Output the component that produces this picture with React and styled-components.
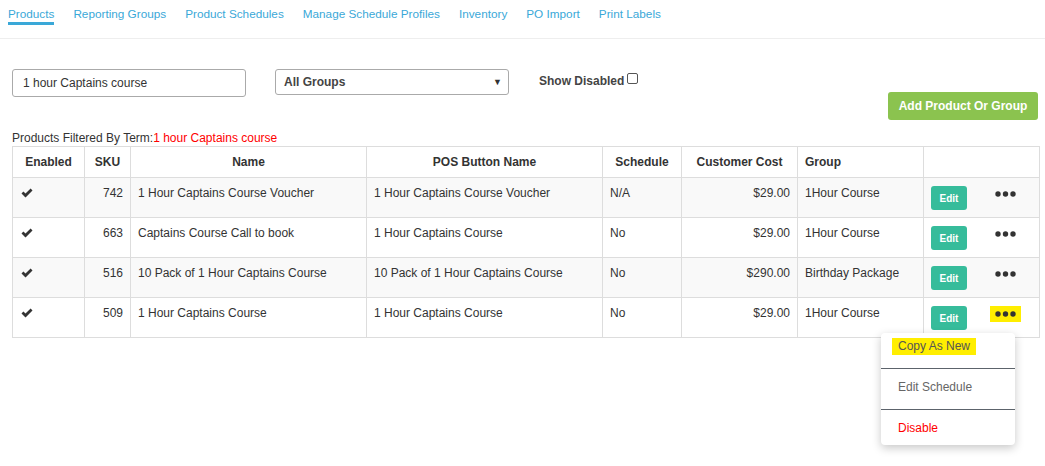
import React from "react"
import styled, { createGlobalStyle } from "styled-components"

const GlobalStyle = createGlobalStyle`
  body {
    margin: 0;
    background: #fff;
    font-family: "Liberation Sans", Arial, sans-serif;
    font-size: 12px;
    color: #333;
  }
  #root {
    min-height: 100vh;
  }
`

const Nav = styled.nav`
  display: flex;
  gap: 19px;
  height: 39px;
  padding: 6px 8px 0;
  box-sizing: border-box;
  border-bottom: 1px solid #eee;
`

const Tab = styled.a`
  color: #3aa8d8;
  font-size: 11.75px;
  line-height: 15px;
  height: 15px;
  padding-bottom: 1px;
  text-decoration: none;
  border-bottom: 3px solid ${props => (props.$active ? "#3aa8d8" : "transparent")};
`

const Content = styled.div`
  padding: 30px 6px 0 12px;
`

const Toolbar = styled.div`
  display: flex;
  align-items: flex-start;
`

const SearchInput = styled.input`
  width: 234px;
  height: 28px;
  box-sizing: border-box;
  border: 1px solid #aaa;
  border-radius: 3px;
  padding: 0 10px;
  font-family: inherit;
  font-size: 12px;
  color: #333;
  outline: none;
`

const GroupSelect = styled.div`
  display: flex;
  align-items: center;
  justify-content: space-between;
  width: 234px;
  height: 26px;
  box-sizing: border-box;
  margin-left: 29px;
  padding: 0 6px 0 8px;
  border: 1px solid #aaa;
  border-radius: 3px;
  font-weight: bold;
  color: #444;
  span {
    font-size: 9px;
    color: #333;
  }
`

const ShowDisabled = styled.label`
  display: flex;
  align-items: center;
  gap: 3px;
  margin: 4px 0 0 30px;
  font-weight: bold;
  color: #444;
  line-height: 14px;
`

const Check = styled.input`
  appearance: none;
  width: 11px;
  height: 11px;
  margin: 0 0 4px;
  border: 1px solid #555;
  border-radius: 2px;
  background: #fff;
`

const AddButton = styled.button`
  margin: 23px 1px 0 auto;
  width: 150px;
  height: 28px;
  background: #8bc34f;
  border: none;
  border-radius: 3px;
  color: #fff;
  font-family: inherit;
  font-size: 12px;
  font-weight: bold;
`

const FilterNote = styled.div`
  margin-top: 11px;
  line-height: 15px;
  em {
    font-style: normal;
    color: #f00;
  }
`

const Table = styled.table`
  width: 1027px;
  table-layout: fixed;
  border-collapse: collapse;
  th,
  td {
    border: 1px solid #ddd;
    padding: 8px 7px 7px;
    vertical-align: top;
    line-height: 15px;
    color: #333;
  }
  th {
    height: 14px;
    font-weight: bold;
    text-align: center;
  }
  tbody tr:nth-child(odd) {
    background: #f9f9f9;
  }
`

const Cell = styled.td`
  && {
    text-align: ${props => props.$align || "left"};
  }
`

const ActionWrap = styled.div`
  position: relative;
  display: flex;
  align-items: flex-start;
`

const EditButton = styled.button`
  width: 36px;
  height: 24px;
  padding: 0;
  border: none;
  border-radius: 3px;
  background: #36bc9b;
  color: #fff;
  font-family: inherit;
  font-size: 10px;
  font-weight: bold;
`

const Dots = styled.div`
  display: flex;
  align-items: center;
  justify-content: center;
  width: 31px;
  height: 16px;
  margin-left: 23px;
  background: ${props => (props.$active ? "#ffee00" : "transparent")};
`

const Menu = styled.ul`
  position: absolute;
  top: 27px;
  left: -50px;
  width: 134px;
  margin: 0;
  padding: 0;
  list-style: none;
  background: #fff;
  border-radius: 4px;
  box-shadow: 0 3px 10px rgba(0, 0, 0, 0.22);
  z-index: 2;
`

const MenuItem = styled.li`
  padding: 10px 17px 13px;
  line-height: 17px;
  color: ${props => props.$color || "#666"};
  & + & {
    border-top: 1px solid #5c636b;
  }
  &:first-child {
    padding-top: 5px;
  }
  &:last-child {
    padding-bottom: 8px;
  }
`

const Highlight = styled.span`
  display: inline-block;
  margin-left: -6px;
  padding: 0 6px;
  background: #ffee00;
  color: #555;
`

const CheckIcon = () => (
  <svg width="12" height="10" viewBox="0 0 12 10" style={{ marginLeft: 1, marginTop: 2 }}>
    <path d="M0.5 5.4 L2.4 3.5 L4.5 5.6 L9.6 0.5 L11.5 2.4 L4.5 9.4 Z" fill="#333" />
  </svg>
)

const DotsIcon = () => (
  <svg width="21" height="6" viewBox="0 0 21 6">
    <circle cx="3" cy="3" r="2.7" fill="#333" />
    <circle cx="10.5" cy="3" r="2.7" fill="#333" />
    <circle cx="18" cy="3" r="2.7" fill="#333" />
  </svg>
)

const tabs = [
  "Products",
  "Reporting Groups",
  "Product Schedules",
  "Manage Schedule Profiles",
  "Inventory",
  "PO Import",
  "Print Labels",
]

const rows = [
  { sku: 742, name: "1 Hour Captains Course Voucher", pos: "1 Hour Captains Course Voucher", schedule: "N/A", cost: "$29.00", group: "1Hour Course" },
  { sku: 663, name: "Captains Course Call to book", pos: "1 Hour Captains Course", schedule: "No", cost: "$29.00", group: "1Hour Course" },
  { sku: 516, name: "10 Pack of 1 Hour Captains Course", pos: "10 Pack of 1 Hour Captains Course", schedule: "No", cost: "$290.00", group: "Birthday Package" },
  { sku: 509, name: "1 Hour Captains Course", pos: "1 Hour Captains Course", schedule: "No", cost: "$29.00", group: "1Hour Course", open: true },
]

export default function App() {
  return (
    <>
      <GlobalStyle />
      <Nav>
        {tabs.map((t, i) => (
          <Tab key={t} $active={i === 0}>
            {t}
          </Tab>
        ))}
      </Nav>
      <Content>
        <Toolbar>
          <SearchInput defaultValue="1 hour Captains course" />
          <GroupSelect>
            All Groups<span>▼</span>
          </GroupSelect>
          <ShowDisabled>
            Show Disabled <Check type="checkbox" />
          </ShowDisabled>
          <AddButton>Add Product Or Group</AddButton>
        </Toolbar>
        <FilterNote>
          Products Filtered By Term:<em>1 hour Captains course</em>
        </FilterNote>
        <Table>
          <colgroup>
            <col style={{ width: 72 }} />
            <col style={{ width: 46 }} />
            <col style={{ width: 236 }} />
            <col style={{ width: 236 }} />
            <col style={{ width: 79 }} />
            <col style={{ width: 116 }} />
            <col style={{ width: 126 }} />
            <col style={{ width: 116 }} />
          </colgroup>
          <thead>
            <tr>
              <th>Enabled</th>
              <th>SKU</th>
              <th>Name</th>
              <th>POS Button Name</th>
              <th>Schedule</th>
              <th>Customer Cost</th>
              <Cell as="th">Group</Cell>
              <th></th>
            </tr>
          </thead>
          <tbody>
            {rows.map(r => (
              <tr key={r.sku}>
                <Cell>
                  <CheckIcon />
                </Cell>
                <Cell $align="right">{r.sku}</Cell>
                <Cell>{r.name}</Cell>
                <Cell>{r.pos}</Cell>
                <Cell>{r.schedule}</Cell>
                <Cell $align="right">{r.cost}</Cell>
                <Cell>{r.group}</Cell>
                <Cell>
                  <ActionWrap>
                    <EditButton>Edit</EditButton>
                    <Dots $active={r.open}>
                      <DotsIcon />
                    </Dots>
                    {r.open && (
                      <Menu>
                        <MenuItem>
                          <Highlight>Copy As New</Highlight>
                        </MenuItem>
                        <MenuItem>Edit Schedule</MenuItem>
                        <MenuItem $color="#f00">Disable</MenuItem>
                      </Menu>
                    )}
                  </ActionWrap>
                </Cell>
              </tr>
            ))}
          </tbody>
        </Table>
      </Content>
    </>
  )
}
